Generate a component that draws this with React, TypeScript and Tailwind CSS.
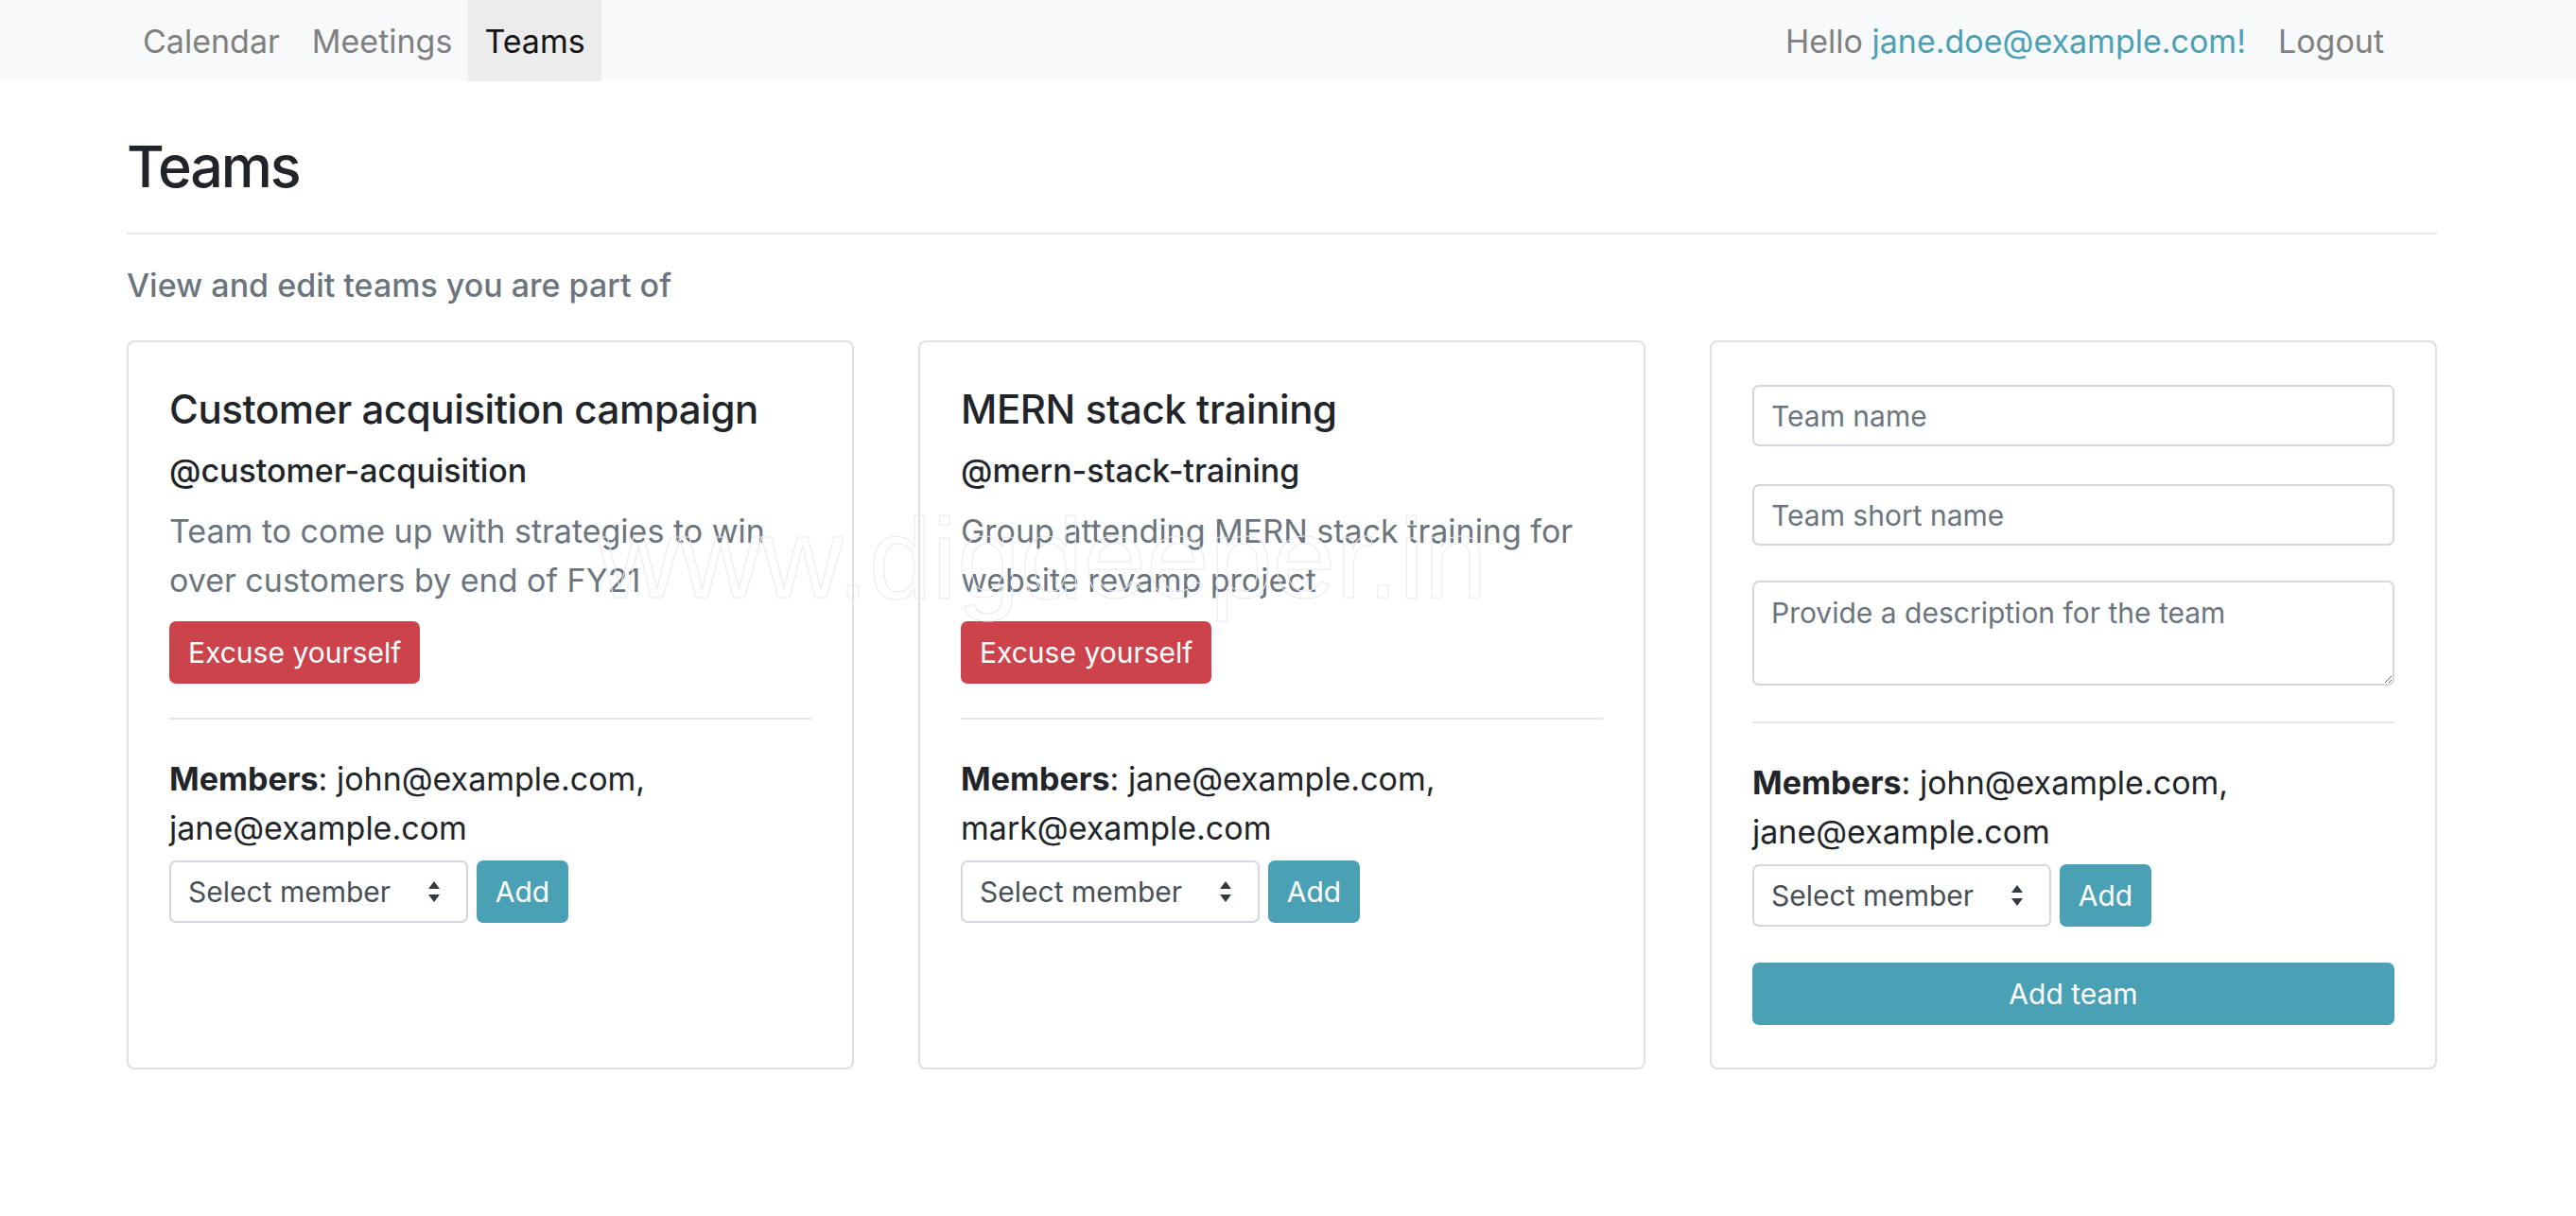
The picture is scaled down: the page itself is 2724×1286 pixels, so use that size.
import React from "react";

const SelectCaret = () => (
  <svg width="16" height="26" viewBox="0 0 16 26" className="shrink-0">
    <path d="M8 2 L14 10 L2 10 Z" fill="#343a40" />
    <path d="M8 24 L14 16 L2 16 Z" fill="#343a40" />
  </svg>
);

const MemberPicker = () => (
  <div className="flex gap-[9px]">
    <div className="flex h-[66px] w-[316px] items-center justify-between rounded-[7px] border-2 border-[#d3d7db] bg-white pl-[18px] pr-[26px] text-[30px] text-[#495057]">
      <span>Select member</span>
      <SelectCaret />
    </div>
    <button className="flex h-[66px] w-[97px] items-center justify-center rounded-[7px] bg-[#4aa1b6] text-[30px] text-white">
      Add
    </button>
  </div>
);

const Members = ({ a, b }: { a: string; b: string }) => (
  <p className="text-[34px] leading-[52px] text-[#212529]">
    <span className="font-bold">Members</span>: {a}, {b}
  </p>
);

const TeamCard = ({
  title,
  handle,
  desc,
  m1,
  m2,
}: {
  title: string;
  handle: string;
  desc: string;
  m1: string;
  m2: string;
}) => (
  <div className="flex flex-col rounded-[8px] border-2 border-[#e0e0e0] bg-white px-[43px] pb-[45px] pt-[45px]">
    <h3 className="text-[42px] font-medium leading-[52px] tracking-[-0.01em] text-[#212529]">{title}</h3>
    <h4 className="mt-[18px] text-[34px] font-medium leading-[42px] text-[#212529]">{handle}</h4>
    <p className="mt-[17px] text-[34px] leading-[52px] text-[#6c757d]">{desc}</p>
    <div className="mt-[17px]">
      <button className="flex h-[66px] items-center rounded-[7px] bg-[#cc434b] px-[20px] text-[30px] text-white">
        Excuse yourself
      </button>
    </div>
    <div className="mt-[36px] h-[2px] bg-[#e5e5e5]" />
    <div className="mt-[37px]">
      <Members a={m1} b={m2} />
    </div>
    <div className="mt-[8px]">
      <MemberPicker />
    </div>
  </div>
);

export default function App() {
  return (
    <div className="relative min-h-screen bg-white" style={{ fontFamily: "Inter, 'Noto Sans', sans-serif" }}>
      <nav className="flex h-[86px] items-stretch justify-between bg-[#f8f9fa] pl-[134px] pr-[186px] text-[34px]">
        <div className="flex items-stretch">
          <a className="flex items-center px-[17px] text-[#808080]">Calendar</a>
          <a className="flex items-center px-[17px] text-[#808080]">Meetings</a>
          <a className="flex items-center bg-[#ececec] px-[17px] text-[#141414]">Teams</a>
        </div>
        <div className="flex items-stretch">
          <span className="flex items-center px-[17px] text-[#808080]">
            Hello&nbsp;<span className="text-[#4aa1b6]">jane.doe@example.com!</span>
          </span>
          <a className="flex items-center px-[17px] text-[#808080]">Logout</a>
        </div>
      </nav>

      <main className="pl-[134px] pr-[147px]">
        <h1 className="mt-[54px] text-[61px] font-medium leading-[72px] tracking-[-0.035em] text-[#212529]">Teams</h1>
        <div className="mt-[34px] h-[2px] bg-[#e6e6e6]" />
        <p className="mt-[28px] text-[34px] font-medium leading-[52px] text-[#6c757d]">View and edit teams you are part of</p>

        <div className="mt-[32px] grid grid-cols-3 gap-[68px]">
          <TeamCard
            title="Customer acquisition campaign"
            handle="@customer-acquisition"
            desc="Team to come up with strategies to win over customers by end of FY21"
            m1="john@example.com"
            m2="jane@example.com"
          />
          <TeamCard
            title="MERN stack training"
            handle="@mern-stack-training"
            desc="Group attending MERN stack training for website revamp project"
            m1="jane@example.com"
            m2="mark@example.com"
          />
          <div className="flex flex-col rounded-[8px] border-2 border-[#e0e0e0] bg-white px-[43px] pb-[45px] pt-[45px]">
            <input
              placeholder="Team name"
              className="h-[65px] rounded-[7px] border-2 border-[#d3d7db] px-[18px] text-[30px] text-[#495057] placeholder:text-[#6c757d]"
            />
            <input
              placeholder="Team short name"
              className="mt-[40px] h-[65px] rounded-[7px] border-2 border-[#d3d7db] px-[18px] text-[30px] text-[#495057] placeholder:text-[#6c757d]"
            />
            <textarea
              placeholder="Provide a description for the team"
              className="mt-[37px] h-[111px] rounded-[7px] border-2 border-[#d3d7db] px-[18px] py-[10px] text-[30px] leading-[1.5] text-[#495057] placeholder:text-[#6c757d]"
            />
            <div className="mt-[38px] h-[2px] bg-[#e5e5e5]" />
            <div className="mt-[37px]">
              <Members a="john@example.com" b="jane@example.com" />
            </div>
            <div className="mt-[8px]">
              <MemberPicker />
            </div>
            <button className="mt-[38px] flex h-[66px] w-full items-center justify-center rounded-[7px] bg-[#4aa1b6] text-[30px] text-white">
              Add team
            </button>
          </div>
        </div>
      </main>

      <div
        className="pointer-events-none absolute left-[632px] top-[530px] select-none text-[120px] font-light leading-none text-transparent [-webkit-text-stroke:1px_#e9eaf0]"
        style={{ fontFamily: "'Liberation Sans', sans-serif" }}
      >
        www.digdeeper.in
      </div>
    </div>
  );
}
